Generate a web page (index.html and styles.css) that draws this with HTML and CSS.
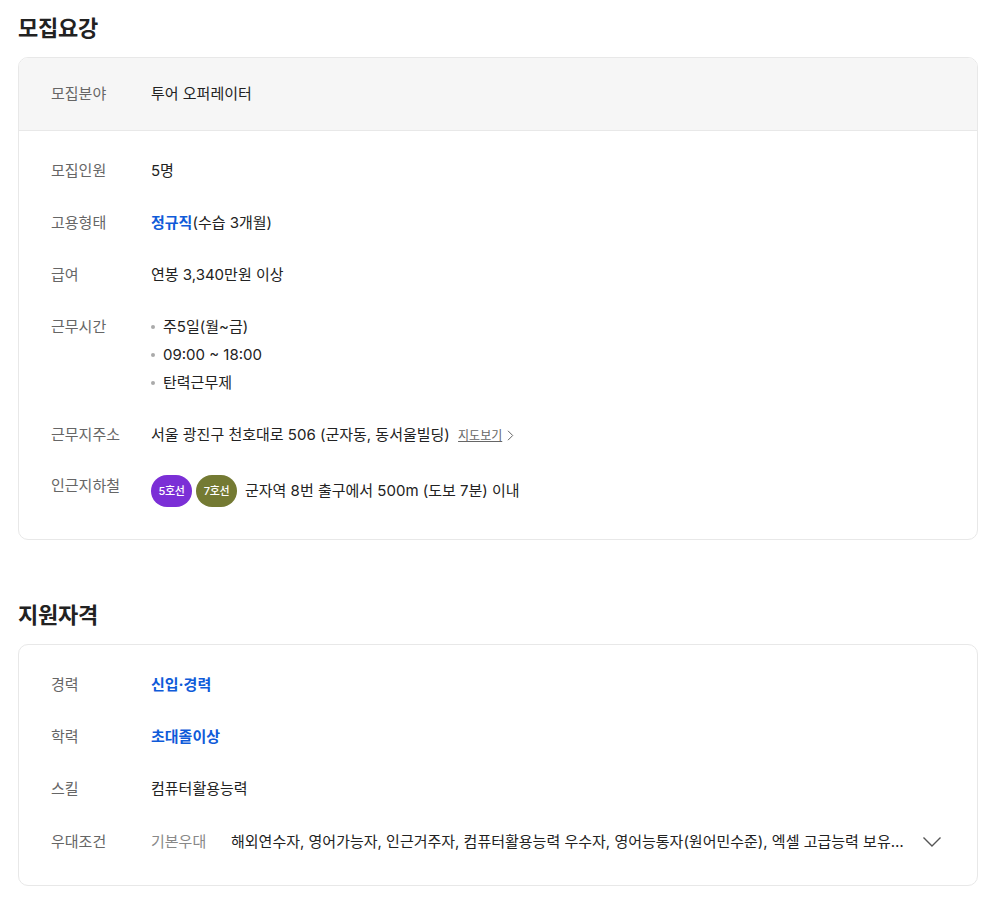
FILE: index.html
```html
<!DOCTYPE html>
<html lang="ko">
<head>
<meta charset="utf-8">
<title>모집요강</title>
<link rel="stylesheet" href="styles.css">
</head>
<body>
<main class="page">
  <section class="section">
    <h2 class="title">모집요강</h2>
    <div class="card">
      <dl class="row row-head"><dt class="label">모집분야</dt><dd class="value">투어 오퍼레이터</dd></dl>
      <div class="body">
        <dl class="row"><dt class="label">모집인원</dt><dd class="value">5명</dd></dl>
        <dl class="row"><dt class="label">고용형태</dt><dd class="value"><strong class="accent">정규직</strong>(수습 3개월)</dd></dl>
        <dl class="row"><dt class="label">급여</dt><dd class="value">연봉 3,340만원 이상</dd></dl>
        <dl class="row">
          <dt class="label">근무시간</dt>
          <dd class="value">
            <ul class="bullets">
              <li>주5일(월~금)</li>
              <li>09:00 ~ 18:00</li>
              <li>탄력근무제</li>
            </ul>
          </dd>
        </dl>
        <dl class="row row-address">
          <dt class="label">근무지주소</dt>
          <dd class="value address">서울 광진구 천호대로 506 (군자동, 동서울빌딩)
            <a class="map-link" href="#">지도보기</a>
            <svg class="map-arrow" width="7" height="11" viewBox="0 0 7 11" aria-hidden="true"><path d="M1 0.8 L5.7 5.5 L1 10.2" fill="none" stroke="#666" stroke-width="1"/></svg>
          </dd>
        </dl>
        <dl class="row row-subway">
          <dt class="label">인근지하철</dt>
          <dd class="value subway">
            <span class="line line-5">5호선</span>
            <span class="line line-7">7호선</span>
            <span class="station">군자역 8번 출구에서 500m (도보 7분) 이내</span>
          </dd>
        </dl>
      </div>
    </div>
  </section>
  <section class="section section-second">
    <h2 class="title">지원자격</h2>
    <div class="card">
      <div class="body body-second">
        <dl class="row"><dt class="label">경력</dt><dd class="value"><strong class="accent">신입·경력</strong></dd></dl>
        <dl class="row"><dt class="label">학력</dt><dd class="value"><strong class="accent">초대졸이상</strong></dd></dl>
        <dl class="row"><dt class="label">스킬</dt><dd class="value">컴퓨터활용능력</dd></dl>
        <dl class="row row-pref">
          <dt class="label">우대조건</dt>
          <dd class="value pref">
            <span class="pref-kind">기본우대</span>
            <span class="pref-text">해외연수자, 영어가능자, 인근거주자, 컴퓨터활용능력 우수자, 영어능통자(원어민수준), 엑셀 고급능력 보유자, 파워포인트 고급능력 보유자</span>
            <svg class="chevron" width="20" height="12" viewBox="0 0 20 12" aria-hidden="true"><path d="M1.5 1.5 L10 10 L18.5 1.5" fill="none" stroke="#555" stroke-width="1.4"/></svg>
          </dd>
        </dl>
      </div>
    </div>
  </section>
</main>
</body>
</html>
```
FILE: styles.css
```css
* { box-sizing: border-box; }
html, body { margin: 0; padding: 0; background: #fff; }
body {
  font-family: "Inter", "Noto Sans CJK KR", "Noto Sans", sans-serif;
  font-size: 15px;
  color: #222;
}
.page { padding: 0 25px 17px 18px; }
.section-second { margin-top: 59px; }
.title {
  margin: 0 0 13px;
  padding-top: 12px;
  font-size: 22px;
  line-height: 32px;
  font-weight: 700;
  letter-spacing: -0.25px;
  color: #222;
}
.section-second .title { padding-top: 0; margin-bottom: 13px; }
.card {
  border: 1px solid #e8e8e8;
  border-radius: 10px;
  overflow: hidden;
}
dl, dd, dt, ul { margin: 0; padding: 0; }
.row { display: flex; align-items: flex-start; line-height: 24px; }
.row + .row { margin-top: 28px; }
.row-head {
  height: 73px;
  align-items: center;
  padding: 0 32px;
  background: #f6f6f6;
  border-bottom: 1px solid #e8e8e8;
}
.body { padding: 28px 32px 32px; }
.body-second { padding: 28px 32px 31px; }
.label { width: 100px; flex: none; color: #666; }
.value { flex: 1; min-width: 0; color: #222; }
.accent { font-weight: 700; color: #0f5bd9; }
.bullets { list-style: none; }
.bullets li { position: relative; padding-left: 12px; line-height: 28px; margin-top: -2px; }
.bullets li + li { margin-top: 0; }
.bullets li::before {
  content: "";
  position: absolute;
  left: 0;
  top: 12px;
  width: 4px;
  height: 4px;
  border-radius: 50%;
  background: #aaa;
}
.row + .row-address { margin-top: 26px; }
.map-link { margin-left: 4px; font-size: 12px; color: #666; text-decoration: underline; }
.map-arrow { margin-left: 1px; vertical-align: -1px; }
.subway { display: flex; align-items: center; gap: 4px; margin-top: 2px; height: 32px; }
.row + .row-subway { margin-top: 25px; }
.row-subway .label { margin-top: 1px; }
.row + .row-pref { margin-top: 29px; }
.line {
  width: 41px;
  height: 32px;
  flex: none;
  border-radius: 16px;
  display: flex;
  align-items: center;
  justify-content: center;
  font-size: 11px;
  font-weight: 500;
  letter-spacing: -0.3px;
  color: #fff;
}
.line-5 { background: #7b2fd6; }
.line-7 { background: #747a33; }
.station { margin-left: 4px; }
.pref { display: flex; align-items: center; }
.pref-kind { width: 80px; flex: none; color: #888; }
.pref-text { flex: none; width: 674px; white-space: nowrap; overflow: hidden; text-overflow: ellipsis; }
.chevron { margin-left: 17px; flex: none; }
```
